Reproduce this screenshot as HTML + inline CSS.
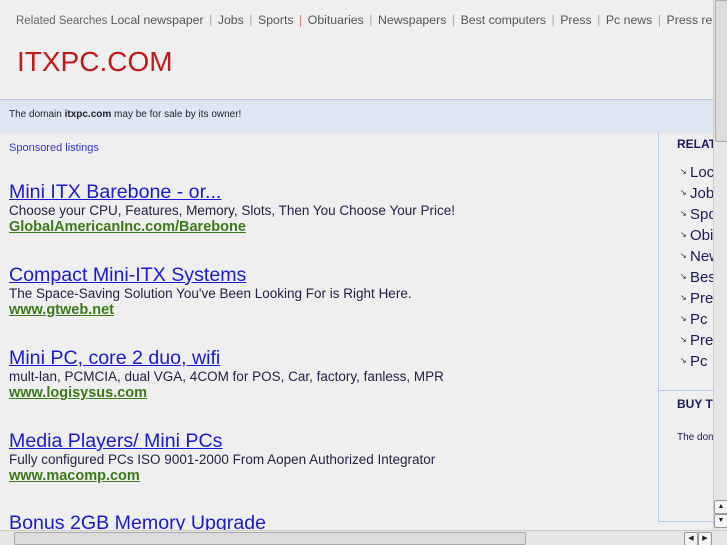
<!DOCTYPE html>
<html><head><style>
html,body{margin:0;width:727px;height:545px;overflow:hidden}
body{background:#efefef;font-family:"Liberation Sans",sans-serif;position:relative}
.a{position:absolute;white-space:nowrap}
.rs{top:13px;left:16px;font-size:11.5px;color:#666;width:697px;overflow:hidden}
.rs span{font-size:12.3px;color:#555}
.rs i{font-style:normal;color:#aaa;margin:0 5.5px}
.logo{top:46px;left:17px;font-size:28px;color:#c0191a}
.band{top:99px;left:0;width:713px;height:33px;background:#dfe6f3;border-top:1px solid #b8c4dc}
.band div{position:absolute;top:9px;left:9px;font-size:10px;color:#223}
.sp{top:142px;left:9px;font-size:11px;color:#3333cc}
.t{left:9px;font-size:19.6px;color:#1a1acc;text-decoration:underline}
.d{left:9px;font-size:13.5px;color:#222244}
.u{left:9px;font-size:14.5px;font-weight:bold;color:#3a7a1a;text-decoration:underline}
.side{top:132px;left:658px;width:60px;height:389px;border-left:1px solid #b8c8ea;border-bottom:1px solid #b8c8ea}
.sh{font-size:12px;font-weight:bold;color:#1a1a55}
.li{left:690px;font-size:15px;color:#1a1a55}
.li:before{content:"↘";font-size:8px;position:absolute;left:-10px;top:3px}
.vs{top:0;left:713px;width:14px;height:530px;background:#e6e6e6;border-left:1px solid #ccc;z-index:5}
.hs{top:530px;left:0;width:727px;height:15px;background:#e6e6e6;border-top:1px solid #ccc;z-index:6}
.btn{background:#f4f4f4;border:1px solid #999;border-radius:2px;width:12px;height:12px;font-size:7px;text-align:center;line-height:12px;color:#222}
</style></head><body>
<div class="a rs">Related Searches <span> Local newspaper<i>|</i>Jobs<i>|</i>Sports<i style="color:#c77">|</i>Obituaries<i>|</i>Newspapers<i>|</i>Best computers<i>|</i>Press<i>|</i>Pc news<i>|</i>Press release</span></div>
<div class="a logo">ITXPC.COM</div>
<div class="a band"><div>The domain <b>itxpc.com</b> may be for sale by its owner!</div></div>
<div class="a sp">Sponsored listings</div>

<div class="a t" style="top:181px">Mini ITX Barebone - or...</div>
<div class="a d" style="top:203px">Choose your CPU, Features, Memory, Slots, Then You Choose Your Price!</div>
<div class="a u" style="top:219px">GlobalAmericanInc.com/Barebone</div>

<div class="a t" style="top:264px">Compact Mini-ITX Systems</div>
<div class="a d" style="top:286px">The Space-Saving Solution You've Been Looking For is Right Here.</div>
<div class="a u" style="top:302px">www.gtweb.net</div>

<div class="a t" style="top:347px">Mini PC, core 2 duo, wifi</div>
<div class="a d" style="top:369px">mult-lan, PCMCIA, dual VGA, 4COM for POS, Car, factory, fanless, MPR</div>
<div class="a u" style="top:385px">www.logisysus.com</div>

<div class="a t" style="top:430px">Media Players/ Mini PCs</div>
<div class="a d" style="top:452px">Fully configured PCs ISO 9001-2000 From Aopen Authorized Integrator</div>
<div class="a u" style="top:468px">www.macomp.com</div>

<div class="a t" style="top:512px">Bonus 2GB Memory Upgrade</div>

<div class="a side"></div>
<div class="a" style="top:390px;left:659px;width:60px;border-top:1px solid #b8c8ea"></div>
<div class="a sh" style="top:137px;left:677px">RELATED</div>
<div class="a li" style="top:164px">Local</div>
<div class="a li" style="top:185px">Jobs</div>
<div class="a li" style="top:206px">Sports</div>
<div class="a li" style="top:227px">Obituaries</div>
<div class="a li" style="top:248px">News</div>
<div class="a li" style="top:269px">Best</div>
<div class="a li" style="top:290px">Press</div>
<div class="a li" style="top:311px">Pc</div>
<div class="a li" style="top:332px">Press</div>
<div class="a li" style="top:353px">Pc</div>
<div class="a sh" style="top:397px;left:677px">BUY THIS</div>
<div class="a" style="top:432px;left:677px;font-size:10px;color:#1a1a55">The domain</div>

<div class="a vs"><div style="position:absolute;left:1px;top:0;width:11px;height:140px;background:#dcdcdc;border:1px solid #aaa;border-radius:2px"></div>
<div class="a btn" style="top:500px;left:0">▲</div><div class="a btn" style="top:514px;left:0">▼</div></div>
<div class="a hs"><div style="position:absolute;left:14px;top:1px;width:510px;height:11px;background:#dcdcdc;border:1px solid #aaa;border-radius:2px"></div>
<div class="a btn" style="top:1px;left:684px">◀</div><div class="a btn" style="top:1px;left:698px">▶</div></div>
</body></html>
